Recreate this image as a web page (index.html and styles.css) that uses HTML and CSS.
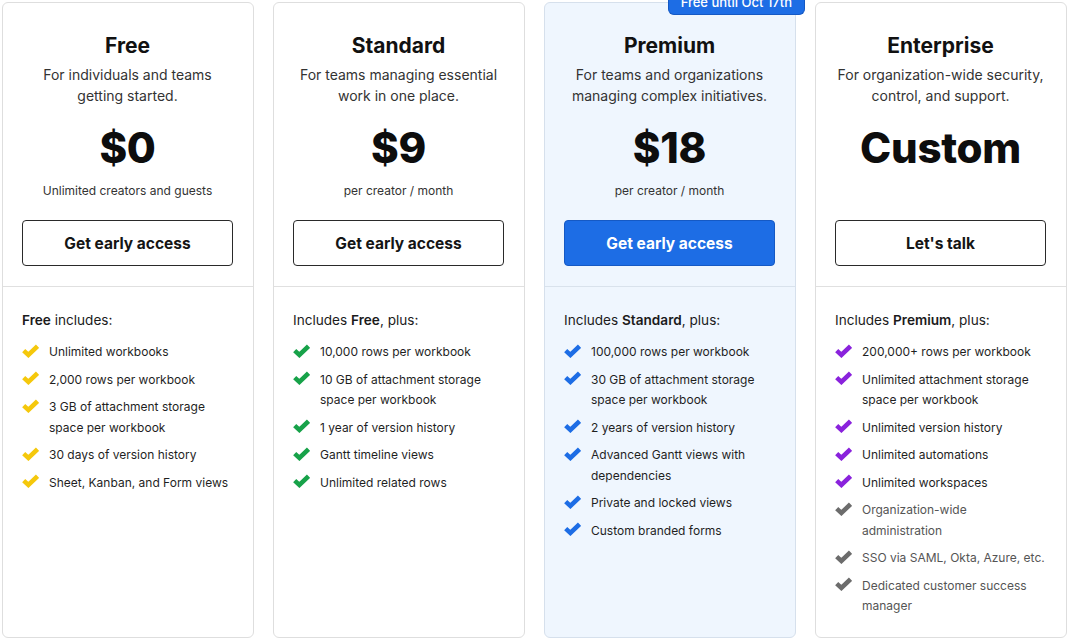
FILE: index.html
```html
<!DOCTYPE html>
<html lang="en">
<head>
<meta charset="utf-8">
<title>Pricing</title>
<link rel="stylesheet" href="styles.css">
</head>
<body>
<svg width="0" height="0" class="defs" aria-hidden="true">
  <defs>
    <symbol id="check" viewBox="0 0 16 13">
      <path d="M1.6 6.2 L6 10.2 L14.6 2" fill="none" stroke="currentColor" stroke-width="4.3" stroke-linejoin="miter" stroke-linecap="butt"/>
    </symbol>
  </defs>
</svg>
<main class="pricing">
  <section class="card">
    <div class="head">
      <h2 class="name">Free</h2>
      <p class="desc">For individuals and teams<br>getting started.</p>
      <div class="price">$0</div>
      <div class="sub">Unlimited creators and guests</div>
      <a class="btn">Get early access</a>
    </div>
    <div class="features">
      <p class="lead"><b>Free</b> includes:</p>
      <ul class="list yellow">
        <li><svg class="ck"><use href="#check"/></svg><span>Unlimited workbooks</span></li>
        <li><svg class="ck"><use href="#check"/></svg><span>2,000 rows per workbook</span></li>
        <li><svg class="ck"><use href="#check"/></svg><span>3 GB of attachment storage space per workbook</span></li>
        <li><svg class="ck"><use href="#check"/></svg><span>30 days of version history</span></li>
        <li><svg class="ck"><use href="#check"/></svg><span>Sheet, Kanban, and Form views</span></li>
      </ul>
    </div>
  </section>
  <section class="card">
    <div class="head">
      <h2 class="name">Standard</h2>
      <p class="desc">For teams managing essential<br>work in one place.</p>
      <div class="price">$9</div>
      <div class="sub">per creator / month</div>
      <a class="btn">Get early access</a>
    </div>
    <div class="features">
      <p class="lead">Includes <b>Free</b>, plus:</p>
      <ul class="list green">
        <li><svg class="ck"><use href="#check"/></svg><span>10,000 rows per workbook</span></li>
        <li><svg class="ck"><use href="#check"/></svg><span>10 GB of attachment storage space per workbook</span></li>
        <li><svg class="ck"><use href="#check"/></svg><span>1 year of version history</span></li>
        <li><svg class="ck"><use href="#check"/></svg><span>Gantt timeline views</span></li>
        <li><svg class="ck"><use href="#check"/></svg><span>Unlimited related rows</span></li>
      </ul>
    </div>
  </section>
  <section class="card featured">
    <div class="badge">Free until Oct 17th</div>
    <div class="head">
      <h2 class="name">Premium</h2>
      <p class="desc">For teams and organizations<br>managing complex initiatives.</p>
      <div class="price">$18</div>
      <div class="sub">per creator / month</div>
      <a class="btn primary">Get early access</a>
    </div>
    <div class="features">
      <p class="lead">Includes <b>Standard</b>, plus:</p>
      <ul class="list blue">
        <li><svg class="ck"><use href="#check"/></svg><span>100,000 rows per workbook</span></li>
        <li><svg class="ck"><use href="#check"/></svg><span>30 GB of attachment storage space per workbook</span></li>
        <li><svg class="ck"><use href="#check"/></svg><span>2 years of version history</span></li>
        <li><svg class="ck"><use href="#check"/></svg><span>Advanced Gantt views with dependencies</span></li>
        <li><svg class="ck"><use href="#check"/></svg><span>Private and locked views</span></li>
        <li><svg class="ck"><use href="#check"/></svg><span>Custom branded forms</span></li>
      </ul>
    </div>
  </section>
  <section class="card">
    <div class="head">
      <h2 class="name">Enterprise</h2>
      <p class="desc">For organization-wide security,<br>control, and support.</p>
      <div class="price">Custom</div>
      <div class="sub"></div>
      <a class="btn">Let's talk</a>
    </div>
    <div class="features">
      <p class="lead">Includes <b>Premium</b>, plus:</p>
      <ul class="list purple">
        <li><svg class="ck"><use href="#check"/></svg><span>200,000+ rows per workbook</span></li>
        <li><svg class="ck"><use href="#check"/></svg><span>Unlimited attachment storage space per workbook</span></li>
        <li><svg class="ck"><use href="#check"/></svg><span>Unlimited version history</span></li>
        <li><svg class="ck"><use href="#check"/></svg><span>Unlimited automations</span></li>
        <li><svg class="ck"><use href="#check"/></svg><span>Unlimited workspaces</span></li>
        <li class="muted"><svg class="ck"><use href="#check"/></svg><span>Organization-wide administration</span></li>
        <li class="muted"><svg class="ck"><use href="#check"/></svg><span>SSO via SAML, Okta, Azure, etc.</span></li>
        <li class="muted"><svg class="ck"><use href="#check"/></svg><span>Dedicated customer success manager</span></li>
      </ul>
    </div>
  </section>
</main>
</body>
</html>
```
FILE: styles.css
```css
* { box-sizing: border-box; }
html, body { margin: 0; padding: 0; background: #ffffff; }
body {
  font-family: Inter, "Noto Sans", "Liberation Sans", sans-serif;
  color: #1b1b1b;
  overflow: hidden;
}
.defs { position: absolute; width: 0; height: 0; }
.pricing {
  display: grid;
  grid-template-columns: repeat(4, 252px);
  grid-template-rows: 636px;
  column-gap: 19px;
  padding: 2px;
  height: 640px;
}
.card {
  position: relative;
  border: 1px solid #dedede;
  border-radius: 6px;
  background: #fff;
  display: flex;
  flex-direction: column;
}
.card.featured {
  background: #eff6fe;
  border-color: #d6e0ec;
}
.badge {
  position: absolute;
  top: -12px;
  right: -10px;
  height: 24px;
  padding: 0 12px;
  background: #1d6de5;
  color: #fff;
  font-size: 13px;
  font-weight: 500;
  line-height: 22px;
  border-radius: 0 0 6px 6px;
  border: 1px solid #1559c4;
  border-top: none;
}
.head {
  padding: 30px 20px 20px 19px;
  text-align: center;
  border-bottom: 1px solid #e0e0e0;
}
.featured .head { border-bottom-color: #d9e2ec; }
.name {
  margin: 0;
  font-size: 21px;
  line-height: 26px;
  font-weight: 700;
  color: #111;
}
.desc {
  margin: 5px 0 0;
  font-size: 14px;
  line-height: 21px;
  color: #333;
}
.price {
  margin-top: 17px;
  font-size: 42px;
  line-height: 50px;
  font-weight: 800;
  color: #0d0d0d;
  letter-spacing: -0.3px;
}
.sub {
  margin-top: 9px;
  height: 18px;
  font-size: 12px;
  line-height: 18px;
  color: #333;
}
.btn {
  display: block;
  margin-top: 20px;
  height: 46px;
  border: 1px solid #2a2a2a;
  border-radius: 4px;
  font-size: 15.5px;
  font-weight: 700;
  line-height: 45px;
  color: #151515;
  background: #fff;
  cursor: pointer;
}
.btn.primary {
  background: #1d6de5;
  border-color: #1559c4;
  color: #fff;
}
.features {
  padding: 23px 18px 0 19px;
}
.lead {
  margin: 0;
  font-size: 13.6px;
  line-height: 20px;
  color: #1b1b1b;
}
.lead b { font-weight: 600; }
.list {
  list-style: none;
  margin: 12px 0 0;
  padding: 0;
}
.list li {
  display: flex;
  gap: 10px;
  font-size: 12px;
  line-height: 20.5px;
  color: #1f1f1f;
  margin-bottom: 7px;
}
.ck {
  flex: none;
  width: 17px;
  height: 14px;
  margin-top: 1.5px;
}
.list.yellow .ck { color: #f5c80c; }
.list.green .ck { color: #17a249; }
.list.blue .ck { color: #1d6de5; }
.list.purple .ck { color: #8a22dc; }
.list li.muted { color: #555; }
.list li.muted .ck { color: #6c6c6c; }
```
